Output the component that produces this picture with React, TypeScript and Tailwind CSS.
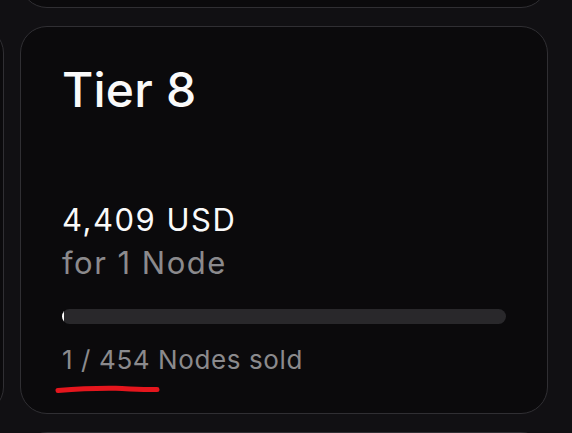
import React from 'react';

const Card = ({ children, className = '' }: { children?: React.ReactNode; className?: string }) => (
  <div className={`relative rounded-[27px] border border-[#302f33] bg-[#0b0a0c] ${className}`}>{children}</div>
);

const App = () => {
  const sold = 1;
  const total = 454;
  return (
    <div className="w-[572px] h-[433px] overflow-hidden bg-[#111013] font-['Inter',sans-serif]">
      <div className="grid grid-cols-[300px_528px] grid-rows-[388px_388px_388px] gap-x-[16px] gap-y-[18px] -ml-[296px] -mt-[380px]">
        <div />
        <Card />
        <Card />
        <Card className="px-[41px] pt-[39px] pb-[32px] flex flex-col">
          <h2 className="text-[48px] leading-none font-medium text-[#fafafa] tracking-[0.2px]">Tier 8</h2>
          <div className="mt-[84px] text-[31px] leading-[43px] tracking-[1.5px]">
            <div className="text-[#fafafa]">4,409 USD</div>
            <div className="text-[#8b8a8d]">for 1 Node</div>
          </div>
          <div className="mt-[25px] h-[15px] w-full rounded-full bg-[#29282b] overflow-hidden">
            <div className="h-full bg-white" style={{ width: `${Math.max(2, (sold / total) * 444)}px` }} />
          </div>
          <div className="mt-[16px] text-[26px] leading-[39px] tracking-[0.6px] text-[#8b8a8d]">
            {sold} / {total} Nodes sold
          </div>
          <svg className="absolute left-0 top-0 pointer-events-none" width="528" height="388" viewBox="0 0 528 388">
            <path
              d="M37 363.5 C 55 362, 75 361, 95 361.3 C 110 361.8, 122 362.8, 136 362.6"
              stroke="#e5161d"
              strokeWidth="5"
              strokeLinecap="round"
              fill="none"
            />
          </svg>
        </Card>
        <div />
        <Card />
      </div>
    </div>
  );
};

export default App;
